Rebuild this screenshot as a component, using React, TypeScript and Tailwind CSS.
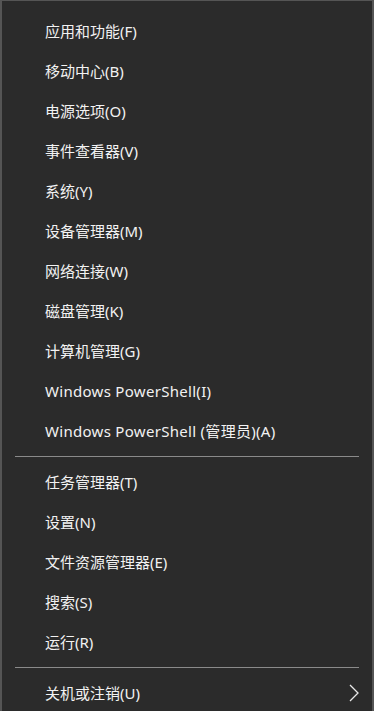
const groups: string[][] = [
  [
    "应用和功能(F)",
    "移动中心(B)",
    "电源选项(O)",
    "事件查看器(V)",
    "系统(Y)",
    "设备管理器(M)",
    "网络连接(W)",
    "磁盘管理(K)",
    "计算机管理(G)",
    "Windows PowerShell(I)",
    "Windows PowerShell (管理员)(A)",
  ],
  ["任务管理器(T)", "设置(N)", "文件资源管理器(E)", "搜索(S)", "运行(R)"],
];

const Item = ({ label, sub }: { label: string; sub?: boolean }) => (
  <div className="flex h-10 items-center justify-between pl-[43px] pr-[13px]">
    <span className={label.startsWith("Windows") ? "tracking-[0.3px]" : ""}>{label}</span>
    {sub && (
      <svg width="10" height="18" viewBox="0 0 10 18" fill="none">
        <path d="M1 1l8 8-8 8" stroke="#e8e8e8" strokeWidth="1.3" />
      </svg>
    )}
  </div>
);

const Separator = () => (
  <div className="flex h-[11px] items-center px-[13px]">
    <div className="h-px w-full bg-[#8a8a8a]" />
  </div>
);

export default function App() {
  return (
    <div
      className="h-[711px] w-[374px] overflow-hidden border-x-2 border-t border-[#555555] bg-[#2b2b2b] pt-[10px] text-[15px] text-[#f2f2f2]"
      style={{ fontFamily: '"Noto Sans", "Noto Sans CJK SC", sans-serif' }}
    >
      {groups[0].map((l) => (
        <Item key={l} label={l} />
      ))}
      <Separator />
      {groups[1].map((l) => (
        <Item key={l} label={l} />
      ))}
      <Separator />
      <Item label="关机或注销(U)" sub />
    </div>
  );
}
